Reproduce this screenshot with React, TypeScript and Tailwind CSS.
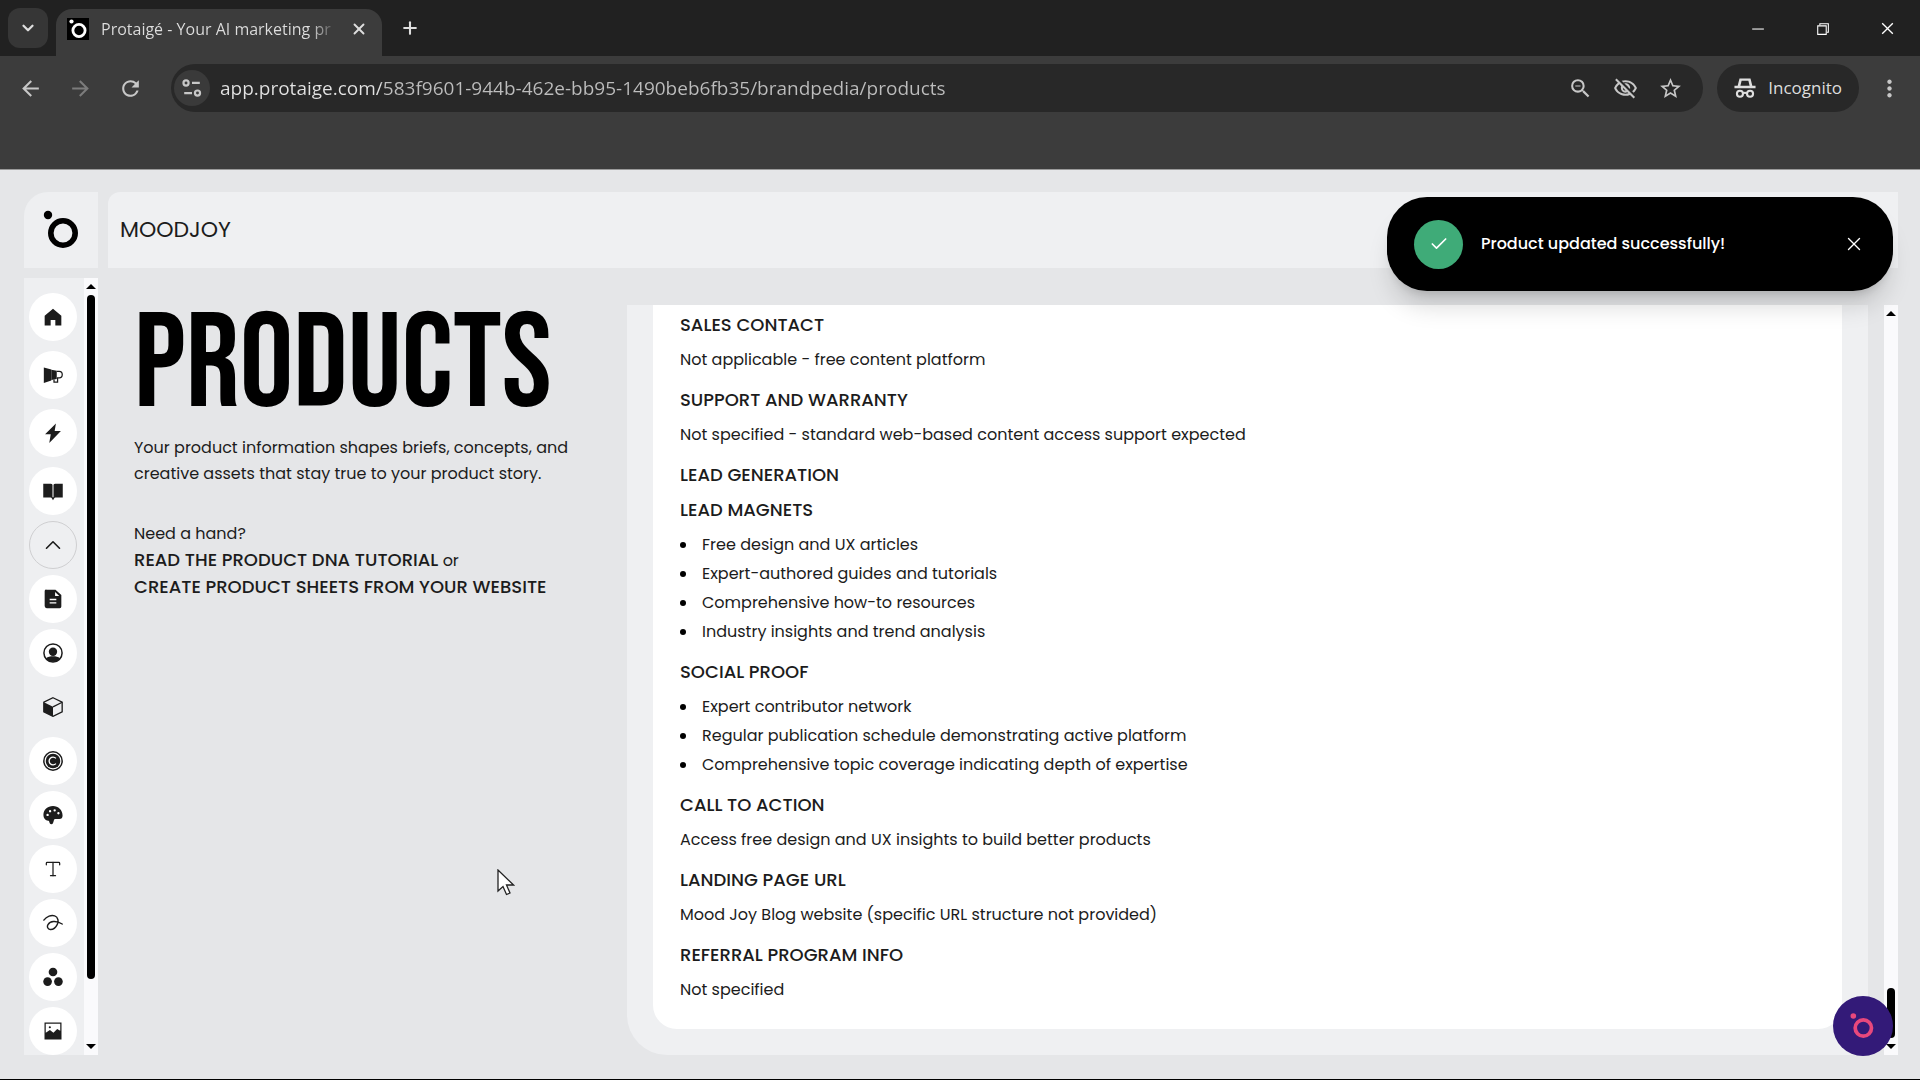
// src/App.tsx
import type { ReactNode } from 'react';
import { Check, ChevronDown, ChevronUp, Plus, Type, X } from 'lucide-react';
import {
  MdArrowBack,
  MdArrowForward,
  MdMoreVert,
  MdOutlineVisibilityOff,
  MdRefresh,
  MdStarBorder,
  MdZoomOut,
} from 'react-icons/md';
import {
  VscChromeClose,
  VscChromeMinimize,
  VscChromeRestore,
} from 'react-icons/vsc';

/* ---------- Icons ---------- */

function Icon({ children, size = 24 }: { children: ReactNode; size?: number }) {
  return (
    <svg
      width={size}
      height={size}
      viewBox="0 0 24 24"
      fill="currentColor"
      aria-hidden="true"
    >
      {children}
    </svg>
  );
}

function BrandMark({ className }: { className?: string }) {
  return (
    <svg viewBox="0 0 36 40" className={className} fill="none" aria-hidden="true">
      <circle cx="5" cy="5" r="4.2" fill="currentColor" />
      <circle cx="20" cy="23" r="12.2" stroke="currentColor" strokeWidth="5.6" />
    </svg>
  );
}

const HomeIcon = () => (
  <Icon>
    <path d="M2 10.500 12 2l10 8.500v11.700h-7.200v-6.700H9.200v6.700H2z" />
  </Icon>
);

const MegaphoneIcon = () => (
  <Icon>
    <path d="M1 3l9 2.400v13.200L1 21.500z" />
    <path d="M10 5.600l6.500 1.200v10L10 18z" />
    <path
      d="M16.500 7.500h3c2.400 0 3.600 1.700 3.600 4s-1.200 4-3.600 4h-2v5h-4.300v-3"
      fill="none"
      stroke="currentColor"
      strokeWidth="1.500"
    />
  </Icon>
);

const BoltIcon = () => (
  <Icon>
    <path d="M15.500.5 2.500 13.500h6.800L7.500 24l14-14.500h-7.500z" />
  </Icon>
);

const BookIcon = () => (
  <Icon>
    <path d="M.3 3.200h8.900c1 0 1.800.5 2.200 1.200v16.300c-.5-.6-1.400-1-2.400-1H.3z" />
    <path d="M23.700 3.200h-8.900c-1 0-1.800.5-2.200 1.200v16.300c.5-.6 1.400-1 2.400-1h8.700z" />
    <path d="M9.800 19.500h4.400L12 23z" />
  </Icon>
);

const FileIcon = () => (
  <Icon>
    <path
      fillRule="evenodd"
      d="M4.500.8h10.500L22 7.300V21a2 2 0 0 1-2 2H4.500A2.500 2.500 0 0 1 2 20.500V2.800a2 2 0 0 1 2.500-2zM14.500 3.500v4.800h5zM8 11.800v1.700h8v-1.700zm0 4v1.700h8v-1.700z"
    />
  </Icon>
);

const AccountIcon = () => (
  <Icon>
    <circle cx="12" cy="12" r="10.900" fill="none" stroke="currentColor" strokeWidth="1.800" />
    <circle cx="12" cy="10.500" r="5" />
    <path d="M3.500 18.500c2.200-1.800 5.300-2.500 8.500-2.500s6.300.7 8.500 2.500a10.900 10.900 0 0 1-17 0z" />
  </Icon>
);

const BoxIcon = () => (
  <Icon>
    <path
      d="M12 .9 23 6.100v11.700L12 23.200 1 17.800V6.100z"
      fill="none"
      stroke="currentColor"
      strokeWidth="1.600"
    />
    <path d="M1 6.300 12 11.800v11.400L1 17.800z" />
    <path d="M12 11.800 23 6.300" fill="none" stroke="currentColor" strokeWidth="1.600" />
  </Icon>
);

const CopyrightIcon = () => (
  <Icon>
    <circle cx="12" cy="12" r="11" fill="none" stroke="currentColor" strokeWidth="1.800" />
    <circle cx="12" cy="12" r="8.700" />
    <path
      d="M15.500 15.200a4.700 4.700 0 1 1 0-6.400"
      fill="none"
      stroke="white"
      strokeWidth="1.600"
    />
  </Icon>
);

const PaletteIcon = () => (
  <Icon>
    <path
      fillRule="evenodd"
      d="M12 1.200C5.400 1.200.5 5.800.5 11.800c0 4.200 2.800 7 5.600 7 1 0 1.300.5 1.500 1.700.2 1.500.9 2.500 2.400 2.500 2.100 0 2.400-2.300 3-4.500.3-1.100 1-1.600 2.200-1.600h4.300c2.700 0 4-1.600 4-4.300C23.500 6 18.300 1.200 12 1.200zM5.500 10.500a1.400 1.400 0 1 1 0 2.800 1.400 1.400 0 0 1 0-2.800zM8.500 6a1.400 1.400 0 1 1 0 2.800 1.400 1.400 0 0 1 0-2.800zm5.500-1a1.400 1.400 0 1 1 0 2.800A1.400 1.400 0 0 1 14 5zm4.500 3.500a1.400 1.400 0 1 1 0 2.800 1.400 1.400 0 0 1 0-2.800z"
    />
  </Icon>
);

const ScribbleIcon = () => (
  <Icon>
    <path
      d="M1 8.500C4.500 4 10 2.200 14 3.500c4.200 1.400 5 6.500 3 10.500-1.600 3.300-5 6-8.300 5.800-3-.2-4.200-3.300-2.700-5.800 2.500-4.200 9.500-5.500 17-.8"
      fill="none"
      stroke="currentColor"
      strokeWidth="1.700"
      strokeLinecap="round"
    />
  </Icon>
);

const DotsIcon = () => (
  <Icon>
    <circle cx="12" cy="6" r="5.200" />
    <circle cx="5.500" cy="17.500" r="5.200" />
    <circle cx="18.500" cy="17.500" r="5.200" />
  </Icon>
);

const ImageIcon = () => (
  <Icon>
    <path
      fillRule="evenodd"
      d="M1.800 1.800h20.400v20.400H1.800zM3.300 3.300v10.900l5-3.400 4.200 3.200 4.500-4.400 3.700 2.200V3.300z"
    />
    <circle cx="8.200" cy="7.500" r="1.300" />
  </Icon>
);

const SiteInfoIcon = () => (
  <Icon size={22}>
    <g fill="none" stroke="currentColor" strokeWidth="2.400">
      <circle cx="5.500" cy="6.500" r="2.800" />
      <path d="M12 6.500h8.500M3.500 17.500H12" />
      <circle cx="18" cy="17.500" r="2.800" />
    </g>
  </Icon>
);

const IncognitoIcon = () => (
  <Icon size={22}>
    <path
      fillRule="evenodd"
      d="M6 1.500h12L20 9.500h3.500v2.800H.5V9.500H4zM8.300 4 7 9.500h10L15.700 4z"
    />
    <g fill="none" stroke="currentColor" strokeWidth="2.300">
      <circle cx="6.500" cy="18.300" r="3.300" />
      <circle cx="17.500" cy="18.300" r="3.300" />
      <path d="M9.800 17.800c1.300-.8 3.100-.8 4.400 0" />
    </g>
  </Icon>
);

/* ---------- Browser chrome ---------- */

function TabBar() {
  return (
    <div className="flex h-14 items-end bg-[#212121] text-[#dedede]">
      <div className="flex h-full items-center px-2">
        <button
          aria-label="Search tabs"
          className="flex h-10 w-10 items-center justify-center rounded-xl bg-[#363636]"
        >
          <ChevronDown size={18} strokeWidth={3} />
        </button>
      </div>
      <div className="flex h-[47px] w-[326px] items-center rounded-t-2xl bg-[#3c3c3c] pb-2 pl-[11px] pr-[14px]">
        <span className="flex h-[22px] w-[22px] shrink-0 items-center justify-center bg-black text-white">
          <BrandMark className="h-5 w-[18px]" />
        </span>
        <span className="ml-3 flex-1 whitespace-nowrap bg-linear-to-r from-[#dedede] from-88% to-transparent bg-clip-text font-['Open_Sans',sans-serif] text-base text-transparent">
          Protaigé - Your AI marketing pr
        </span>
        <button aria-label="Close tab" className="ml-3">
          <X size={18} strokeWidth={2.500} />
        </button>
      </div>
      <button aria-label="New tab" className="flex h-14 w-14 items-center justify-center">
        <Plus size={20} strokeWidth={2.500} />
      </button>
      <div className="ml-auto flex h-full items-center gap-12 pr-6 text-white">
        <button aria-label="Minimize">
          <VscChromeMinimize size={17} />
        </button>
        <button aria-label="Restore">
          <VscChromeRestore size={17} />
        </button>
        <button aria-label="Close window">
          <VscChromeClose size={17} />
        </button>
      </div>
    </div>
  );
}

function AddressBar() {
  return (
    <div className="h-[114px] border-b border-[#9a9a9a] bg-[#3c3c3c] pt-2 font-['Open_Sans',sans-serif] text-[#c7c7c7]">
      <div className="flex items-center">
        <div className="flex w-[171px] items-center gap-[25px] pl-[18px]">
          <button aria-label="Back">
            <MdArrowBack size={25} />
          </button>
          <button aria-label="Forward" className="text-[#7c7c7c]">
            <MdArrowForward size={25} />
          </button>
          <button aria-label="Reload">
            <MdRefresh size={25} />
          </button>
        </div>
        <div className="flex h-12 flex-1 items-center rounded-full bg-[#282828] pl-[3px] pr-5">
          <button
            aria-label="Site information"
            className="flex h-9 w-9 items-center justify-center rounded-full bg-[#3a3a3a]"
          >
            <SiteInfoIcon />
          </button>
          <input
            aria-label="Address"
            defaultValue="app.protaige.com/583f9601-944b-462e-bb95-1490beb6fb35/brandpedia/products"
            className="ml-[10px] flex-1 bg-[linear-gradient(90deg,#e3e3e3_161px,#bdbdbd_161px)] bg-clip-text text-[19px] text-transparent outline-none"
          />
          <div className="flex items-center gap-5">
            <button aria-label="Zoom">
              <MdZoomOut size={25} />
            </button>
            <button aria-label="Third-party cookies blocked">
              <MdOutlineVisibilityOff size={25} />
            </button>
            <button aria-label="Bookmark">
              <MdStarBorder size={25} />
            </button>
          </div>
        </div>
        <button className="ml-[14px] flex h-12 items-center gap-3 rounded-full bg-[#282828] px-[17px] text-[17px] text-[#dedede]">
          <IncognitoIcon />
          Incognito
        </button>
        <button aria-label="Menu" className="mx-[17px]">
          <MdMoreVert size={27} />
        </button>
      </div>
    </div>
  );
}

/* ---------- App ---------- */

const mainNav = [
  { id: 'home', label: 'Home', icon: <HomeIcon /> },
  { id: 'campaigns', label: 'Campaigns', icon: <MegaphoneIcon /> },
  { id: 'quick', label: 'Quick create', icon: <BoltIcon /> },
  { id: 'brandpedia', label: 'Brandpedia', icon: <BookIcon /> },
];

const brandNav = [
  { id: 'documents', label: 'Documents', icon: <FileIcon /> },
  { id: 'audience', label: 'Audience', icon: <AccountIcon /> },
  { id: 'products', label: 'Products', icon: <BoxIcon /> },
  { id: 'trademark', label: 'Trademark', icon: <CopyrightIcon /> },
  { id: 'colors', label: 'Colors', icon: <PaletteIcon /> },
  { id: 'fonts', label: 'Typography', icon: <Type size={20} strokeWidth={1.500} /> },
  { id: 'shapes', label: 'Shapes', icon: <ScribbleIcon /> },
  { id: 'elements', label: 'Elements', icon: <DotsIcon /> },
  { id: 'images', label: 'Images', icon: <ImageIcon /> },
];

function NavButton({
  label,
  active,
  children,
}: {
  label: string;
  active?: boolean;
  children: ReactNode;
}) {
  return (
    <button
      aria-label={label}
      className={`flex h-12 w-12 shrink-0 items-center justify-center rounded-full [&_svg]:h-5 [&_svg]:w-5 ${
        active ? '' : 'bg-white'
      }`}
    >
      {children}
    </button>
  );
}

function ScrollTrack({ thumb }: { thumb: ReactNode }) {
  return (
    <div className="flex w-[14px] shrink-0 flex-col items-center bg-[#fafafc] py-[6px]">
      <svg width="10" height="5" viewBox="0 0 10 5" aria-hidden="true">
        <path d="M5 0l5 5H0z" />
      </svg>
      <div className="flex w-2 flex-1 flex-col py-[6px]">{thumb}</div>
      <svg width="10" height="5" viewBox="0 0 10 5" aria-hidden="true">
        <path d="M0 0h10L5 5z" />
      </svg>
    </div>
  );
}

function Sidebar() {
  return (
    <aside className="flex w-[74px] shrink-0 flex-col gap-[10px]">
      <div className="flex h-[76px] items-center justify-center rounded-tl-3xl bg-[#eeeff1] text-black">
        <BrandMark className="h-10 w-9" />
      </div>
      <div className="flex flex-1 bg-[#eeeff1]">
        <nav className="flex flex-1 flex-col items-center gap-[6px] pr-[2px] pt-[15px]">
          <div className="flex flex-col gap-[10px]">
            {mainNav.map((item) => (
              <NavButton key={item.id} label={item.label}>
                {item.icon}
              </NavButton>
            ))}
          </div>
          <button
            aria-label="Collapse"
            className="flex h-12 w-12 shrink-0 items-center justify-center rounded-full border border-[#cfcfd1]"
          >
            <ChevronUp size={26} strokeWidth={1.500} />
          </button>
          {brandNav.map((item) => (
            <NavButton key={item.id} label={item.label} active={item.id === 'products'}>
              {item.icon}
            </NavButton>
          ))}
        </nav>
        <ScrollTrack
          thumb={
            <>
              <div className="grow-[92] rounded-full bg-black" />
              <div className="grow-[8]" />
            </>
          }
        />
      </div>
    </aside>
  );
}

type Section = { title: string; body?: string; items?: string[] };

const sections: Section[] = [
  { title: 'Sales contact', body: 'Not applicable - free content platform' },
  {
    title: 'Support and warranty',
    body: 'Not specified - standard web-based content access support expected',
  },
  { title: 'Lead generation' },
  {
    title: 'Lead magnets',
    items: [
      'Free design and UX articles',
      'Expert-authored guides and tutorials',
      'Comprehensive how-to resources',
      'Industry insights and trend analysis',
    ],
  },
  {
    title: 'Social proof',
    items: [
      'Expert contributor network',
      'Regular publication schedule demonstrating active platform',
      'Comprehensive topic coverage indicating depth of expertise',
    ],
  },
  {
    title: 'Call to action',
    body: 'Access free design and UX insights to build better products',
  },
  {
    title: 'Landing page URL',
    body: 'Mood Joy Blog website (specific URL structure not provided)',
  },
  { title: 'Referral program info', body: 'Not specified' },
];

function ProductSheet() {
  return (
    <section className="flex-1 rounded-bl-[40px] bg-[#eff0f2] px-[26px] pb-[26px]">
      <div className="h-full rounded-b-3xl bg-white px-[27px] pt-2">
        {sections.map((section) => (
          <div key={section.title}>
            <h3 className="mb-[11px] text-lg/6 font-medium uppercase">{section.title}</h3>
            {section.body && <p className="mb-4 text-base/6">{section.body}</p>}
            {section.items && (
              <ul className="mb-4 flex flex-col gap-[5px]">
                {section.items.map((item) => (
                  <li key={item} className="flex items-center text-base/6">
                    <span className="mr-4 h-[6px] w-[6px] rounded-full bg-black" />
                    {item}
                  </li>
                ))}
              </ul>
            )}
          </div>
        ))}
      </div>
    </section>
  );
}

function Toast() {
  return (
    <div
      role="status"
      className="absolute right-[27px] top-[27px] flex h-[94px] w-[506px] items-center rounded-[40px] bg-black pl-[27px] pr-[28px] text-white shadow-xl shadow-black/15"
    >
      <span className="flex h-[49px] w-[49px] items-center justify-center rounded-full bg-[#3fab78]">
        <Check size={20} strokeWidth={2} />
      </span>
      <p className="ml-[18px] text-base/6 font-medium">Product updated successfully!</p>
      <button aria-label="Dismiss" className="ml-auto">
        <X size={22} strokeWidth={1.500} />
      </button>
    </div>
  );
}

export default function App() {
  return (
    <div className="flex min-h-screen flex-col bg-[#e5e6e8] font-['Poppins','Inter',sans-serif] text-[#1c1c1c]">
      <TabBar />
      <AddressBar />
      <div className="relative flex flex-1 gap-[10px] border-b-[3px] border-black pb-6 pl-6 pr-[22px] pt-[22px]">
        <Sidebar />
        <div className="flex flex-1 flex-col">
          <header className="flex h-[76px] items-center rounded-tl-xl bg-[#eff0f2] px-3">
            <h2 className="text-[22px]/8">MOODJOY</h2>
          </header>
          <main className="mt-[37px] flex flex-1">
            <div className="w-[519px] shrink-0 pl-[26px]">
              <h1 className="font-['Bebas_Neue','Liberation_Sans_Narrow',sans-serif] text-[134px]/[122px] text-black">
                PRODUCTS
              </h1>
              <p className="mt-2 w-[440px] text-base/[26px]">
                Your product information shapes briefs, concepts, and creative assets that stay
                true to your product story.
              </p>
              <p className="mt-[34px] text-base/[26px]">Need a hand?</p>
              <p className="text-base/[26px]">
                <a href="#tutorial" className="text-lg/[26px] font-medium">
                  READ THE PRODUCT DNA TUTORIAL
                </a>{' '}
                or
              </p>
              <a href="#create" className="block text-lg/[26px] font-medium">
                CREATE PRODUCT SHEETS FROM YOUR WEBSITE
              </a>
            </div>
            <ProductSheet />
            <div className="ml-4 flex">
              <ScrollTrack
                thumb={
                  <>
                    <div className="grow-[93]" />
                    <div className="grow-[7] rounded-full bg-black" />
                  </>
                }
              />
            </div>
          </main>
        </div>

        <Toast />
        <button
          aria-label="Open assistant"
          className="absolute bottom-[23px] right-[27px] flex h-[60px] w-[60px] items-center justify-center rounded-full bg-[#331a78] pr-[2px] text-[#e8487c]"
        >
          <BrandMark className="h-7 w-6" />
        </button>
        {/* Mouse pointer */}
        <svg
          className="absolute left-[497px] top-[699px]"
          width="18"
          height="27"
          viewBox="0 0 18 27"
          aria-hidden="true"
        >
          <path
            d="M1 1v21l5-4.500 3.500 8 3.500-1.500-3.500-8h7z"
            fill="white"
            stroke="#222"
            strokeWidth="1.300"
          />
        </svg>
      </div>
    </div>
  );
}
